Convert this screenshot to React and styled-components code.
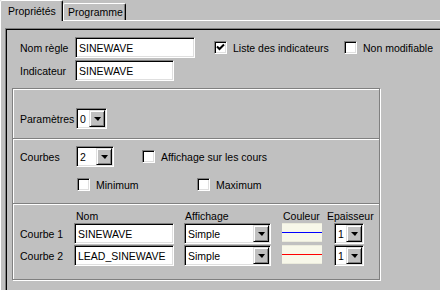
import React from 'react';
import styled, { createGlobalStyle } from 'styled-components';

const GlobalStyle = createGlobalStyle`
  html, body {
    margin: 0;
    padding: 0;
    background: #c0c0c0;
    overflow: hidden;
  }
  #root {
    width: 440px;
    height: 290px;
    overflow: hidden;
  }
`;

const Window = styled.div`
  width: 440px;
  height: 290px;
  background: #c0c0c0;
  font-family: "Liberation Sans", Arial, sans-serif;
  font-size: 10.5px;
  color: #000;
  overflow: hidden;
  display: flex;
  flex-direction: column;
`;

const TabStrip = styled.div`
  display: flex;
  align-items: flex-end;
  height: 20px;
  position: relative;
  z-index: 1;
`;

const Tab = styled.div`
  box-sizing: border-box;
  width: ${({ $w }) => $w}px;
  height: ${({ $active }) => ($active ? 21 : 17)}px;
  margin-bottom: ${({ $active }) => ($active ? -1 : 0)}px;
  padding-left: ${({ $active }) => ($active ? 7 : 4)}px;
  display: flex;
  align-items: center;
  background: #c0c0c0;
  border-top: 1px solid #fff;
  border-left: 1px solid #fff;
  border-right: 1px solid #000;
  box-shadow: inset -1px 0 0 #808080;
  border-top-left-radius: 2px;
  border-top-right-radius: 2px;
`;

const Panel = styled.div`
  flex: 1;
  border-top: 1px solid #fff;
  border-left: 1px solid #fff;
  padding: 7px 0 0 4px;
  display: flex;
`;

const Frame = styled.div`
  box-sizing: border-box;
  width: 460px;
  flex-shrink: 0;
  border-top: 1px solid #808080;
  border-left: 1px solid #808080;
  box-shadow: inset 1px 1px 0 #000;
  padding-top: 8px;
`;

const FormRow = styled.div`
  display: flex;
  align-items: center;
  height: 21px;
  padding-left: 14px;
  margin-top: ${({ $mt }) => $mt || 0}px;
`;

const Label = styled.div`
  width: ${({ $w }) => $w}px;
  flex-shrink: 0;
  white-space: nowrap;
`;

const Sunken = styled.div`
  box-sizing: border-box;
  width: ${({ $w }) => $w}px;
  height: ${({ $h }) => $h || 21}px;
  flex-shrink: 0;
  border: 1px solid;
  border-color: #808080 #fff #fff #808080;
  box-shadow: inset 1px 1px 0 #000, inset -1px -1px 0 #dfdfdf;
  background: #fff;
  display: flex;
  align-items: center;
  padding-left: 3px;
  white-space: nowrap;
`;

const DropButton = styled.div`
  box-sizing: border-box;
  width: 16px;
  height: 17px;
  margin-left: auto;
  margin-right: 1px;
  background: #c0c0c0;
  border: 1px solid;
  border-color: #dfdfdf #000 #000 #dfdfdf;
  box-shadow: inset 1px 1px 0 #fff, inset -1px -1px 0 #808080;
  display: flex;
  align-items: center;
  justify-content: center;

  &::after {
    content: '';
    width: 0;
    height: 0;
    border-left: 4px solid transparent;
    border-right: 3px solid transparent;
    border-top: 4px solid #000;
    margin-top: 1px;
  }
`;

const CheckItem = styled.div`
  display: flex;
  align-items: center;
  gap: 6px;
  width: ${({ $w }) => ($w ? `${$w}px` : 'auto')};
  margin-left: ${({ $ml }) => $ml || 0}px;
  white-space: nowrap;
  flex-shrink: 0;
`;

const Box = styled.div`
  box-sizing: border-box;
  width: 13px;
  height: 13px;
  border: 1px solid;
  border-color: #808080 #fff #fff #808080;
  box-shadow: inset 1px 1px 0 #000, inset -1px -1px 0 #dfdfdf;
  background: #fff;
  display: flex;
  align-items: center;
  justify-content: center;
`;

const GroupBox = styled.div`
  box-sizing: border-box;
  width: 368px;
  height: 192px;
  margin: 7px 0 0 6px;
  border: 1px solid #808080;
  box-shadow: 1px 1px 0 #fff, inset 1px 1px 0 #fff;
  display: flex;
  flex-direction: column;
`;

const Section = styled.div`
  box-sizing: border-box;
  height: ${({ $h }) => ($h ? `${$h}px` : 'auto')};
  flex: ${({ $h }) => ($h ? '0 0 auto' : 1)};
  padding: ${({ $pt }) => $pt}px 0 0 7px;
  border-bottom: ${({ $last }) => ($last ? 'none' : '1px solid #808080')};
  box-shadow: ${({ $last }) => ($last ? 'none' : '0 1px 0 #fff')};
`;

const Line = styled.div`
  display: flex;
  align-items: center;
  height: ${({ $h }) => $h || 21}px;
  margin-top: ${({ $mt }) => $mt || 0}px;
`;

const CurveGrid = styled.div`
  display: grid;
  grid-template-columns: 54px 110px 98px 52px 30px;
  grid-template-rows: 13px 21px 21px;
  row-gap: 1px;
  align-items: center;
`;

const Header = styled.div`
  white-space: nowrap;
  margin-left: ${({ $ml }) => $ml || 0}px;
  margin-top: ${({ $mt }) => $mt || 0}px;
  align-self: ${({ $mt }) => ($mt ? 'end' : 'center')};
`;

const Swatch = styled.div`
  box-sizing: border-box;
  width: 40px;
  height: 19px;
  align-self: start;
  background: #f7f7e9;
  border-top: 1px solid #ebebdc;
  border-bottom: 1px solid #ebebdc;
  display: flex;
  align-items: center;
`;

const SwatchLine = styled.div`
  width: 100%;
  height: 1px;
  background: ${({ $color }) => $color};
`;

const Select = ({ w, value }) => (
  <Sunken $w={w}>
    <span>{value}</span>
    <DropButton />
  </Sunken>
);

const Check = ({ checked, label, w, ml }) => (
  <CheckItem $w={w} $ml={ml}>
    <Box>
      {checked && (
        <svg width="9" height="9" viewBox="0 0 9 9">
          <path d="M1 3.5 L3.5 6 L8 1.5" stroke="#000" strokeWidth="2" fill="none" />
        </svg>
      )}
    </Box>
    <span>{label}</span>
  </CheckItem>
);

const curves = [
  { name: 'Courbe 1', value: 'SINEWAVE', color: '#0000ff' },
  { name: 'Courbe 2', value: 'LEAD_SINEWAVE', color: '#ff0000' },
];

const App = () => (
  <Window>
    <GlobalStyle />
    <TabStrip>
      <Tab $active $w={63}>Propriétés</Tab>
      <Tab $w={63}>Programme</Tab>
    </TabStrip>
    <Panel>
      <Frame>
        <FormRow>
          <Label $w={55}>Nom règle</Label>
          <Sunken $w={120}>SINEWAVE</Sunken>
          <Check checked label="Liste des indicateurs" w={130} ml={19} />
          <Check label="Non modifiable" />
        </FormRow>
        <FormRow $mt={2}>
          <Label $w={55}>Indicateur</Label>
          <Sunken $w={99}>SINEWAVE</Sunken>
        </FormRow>

        <GroupBox>
          <Section $h={50} $pt={19}>
            <Line>
              <Label $w={56}>Paramètres</Label>
              <Select w={31} value="0" />
            </Line>
          </Section>
          <Section $h={65} $pt={7}>
            <Line>
              <Label $w={56}>Courbes</Label>
              <Select w={38} value="2" />
              <Check label="Affichage sur les cours" ml={28} />
            </Line>
            <Line $h={13} $mt={11}>
              <Check label="Minimum" w={120} ml={57} />
              <Check label="Maximum" />
            </Line>
          </Section>
          <Section $last $pt={5}>
            <CurveGrid>
              <span />
              <Header $ml={2}>Nom</Header>
              <Header $ml={1} $mt={3}>Affichage</Header>
              <Header $ml={1}>Couleur</Header>
              <Header $ml={-7}>Epaisseur</Header>
              {curves.map((c) => (
                <React.Fragment key={c.name}>
                  <Label $w={54}>{c.name}</Label>
                  <Sunken $w={100}>{c.value}</Sunken>
                  <Select w={87} value="Simple" />
                  <Swatch>
                    <SwatchLine $color={c.color} />
                  </Swatch>
                  <Select w={30} value="1" />
                </React.Fragment>
              ))}
            </CurveGrid>
          </Section>
        </GroupBox>
      </Frame>
    </Panel>
  </Window>
);

export default App;
